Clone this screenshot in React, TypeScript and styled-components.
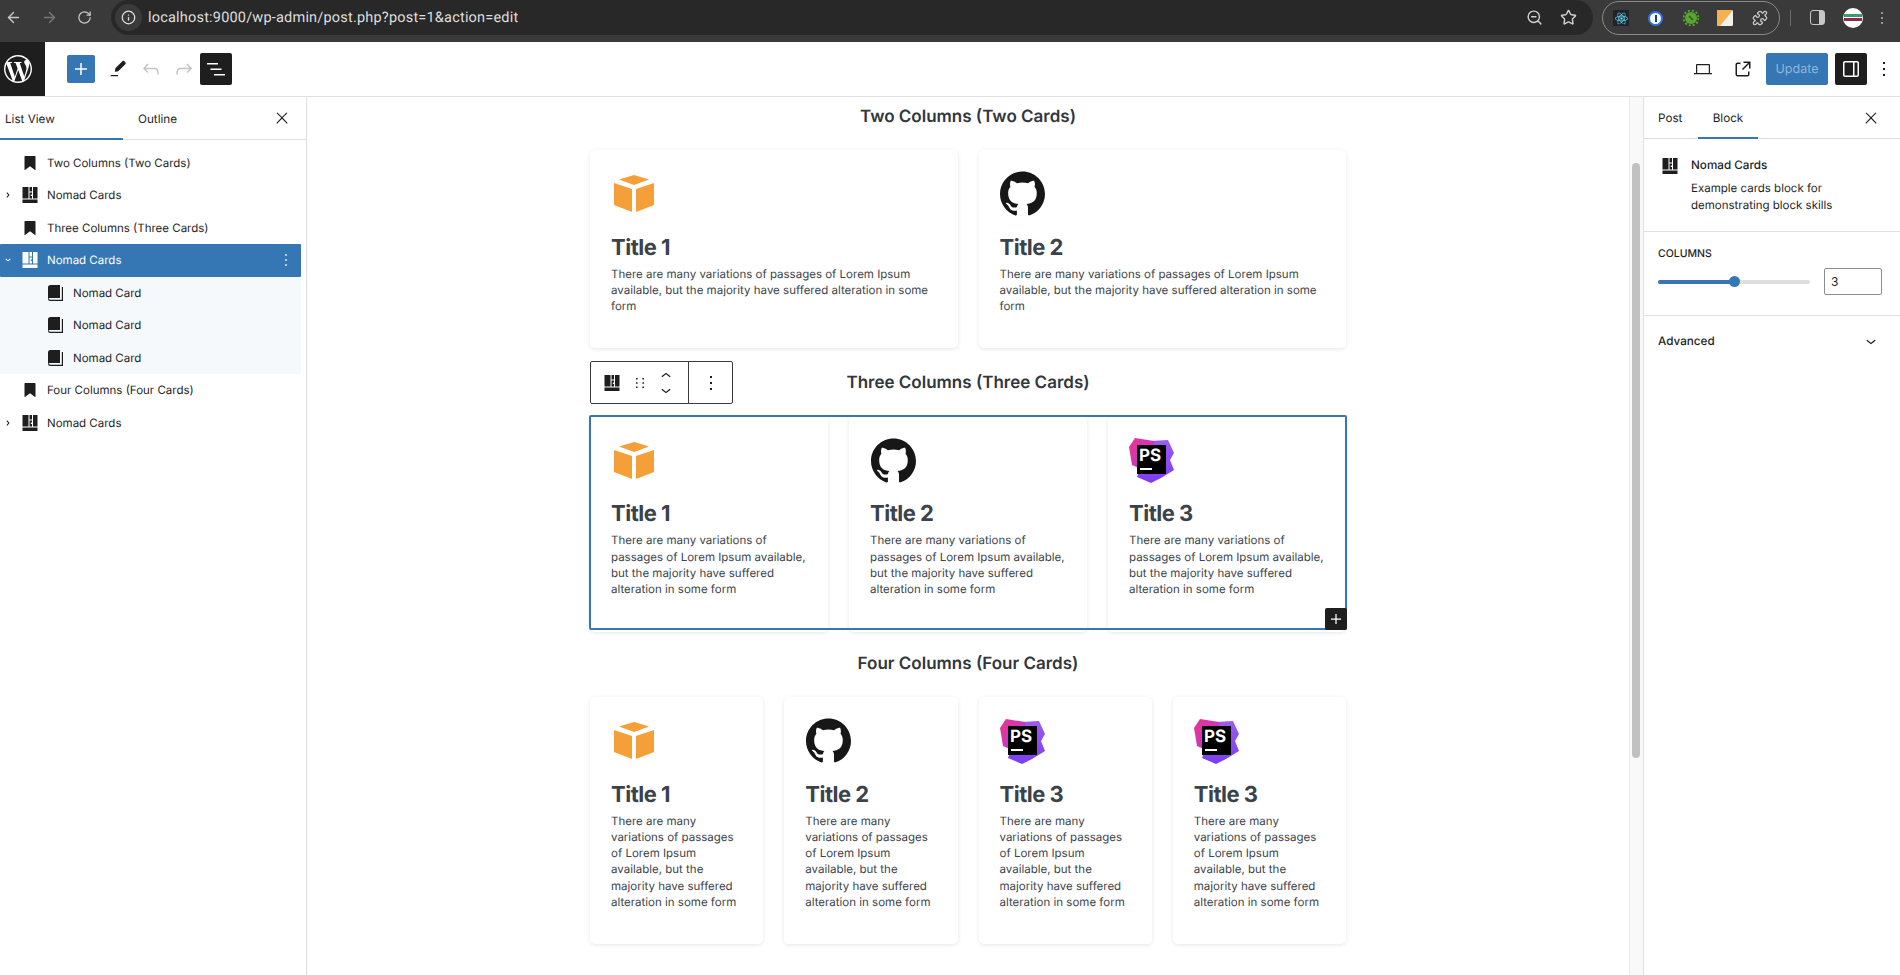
import React from 'react';
import styled, { createGlobalStyle } from 'styled-components';
import { ArrowLeft, ArrowRight, RotateCw, Info, ZoomOut, Star, Puzzle } from 'lucide-react';
import { SiReact, SiWordpress, SiGithub } from 'react-icons/si';

const BLUE = '#3577b4';
const DARK = '#1e1e1e';
const BODY_FONT = 'Inter, "Liberation Sans", sans-serif';
const LOREM = 'There are many variations of passages of Lorem Ipsum available, but the majority have suffered alteration in some form';

const GlobalStyle = createGlobalStyle`
  html, body {
    margin: 0;
    height: 100%;
    overflow: hidden;
    background: #fff;
    font-family: ${BODY_FONT};
    text-rendering: geometricPrecision;
  }
  * {
    box-sizing: border-box;
  }
  svg {
    flex: none;
  }
`;

const Page = styled.div`
  width: 1900px;
  height: 975px;
  display: flex;
  flex-direction: column;
  overflow: hidden;
`;

/* browser chrome */
const ChromeBar = styled.header`
  height: 42px;
  flex: none;
  background: #3a3a3a;
  display: flex;
  align-items: flex-start;
  color: #c7c7c7;
`;

const NavGroup = styled.div`
  width: 111px;
  height: 35px;
  flex: none;
  display: flex;
  align-items: center;
  padding-left: 5px;
  gap: 19px;
`;

const NavIcon = styled.span<{ $dim?: boolean }>`
  display: flex;
  color: ${(p) => (p.$dim ? '#777' : '#c7c7c7')};
`;

const Omnibox = styled.div`
  flex: 1;
  height: 35px;
  background: #282828;
  border-radius: 18px;
  display: flex;
  align-items: center;
  padding: 0 16px 0 4px;
`;

const InfoChip = styled.span`
  width: 27px;
  height: 27px;
  border-radius: 50%;
  background: #3a3a3a;
  display: flex;
  align-items: center;
  justify-content: center;
  color: #e3e3e3;
  margin-right: 6px;
`;

const UrlText = styled.span`
  font-family: Roboto, sans-serif;
  font-size: 14.5px;
  color: #dedede;
  letter-spacing: 0.2px;
  flex: 1;
`;

const OmniAction = styled.span`
  display: flex;
  margin-left: 17px;
  color: #d0d0d0;
`;

const ExtensionPill = styled.div`
  width: 178px;
  height: 34px;
  margin: 1px 0 0 9px;
  border: 1px solid #8a8a8a;
  border-radius: 17px;
  display: flex;
  align-items: center;
  justify-content: space-between;
  padding: 0 9px 0 8px;
`;

const ExtensionSlot = styled.span`
  width: 20px;
  height: 20px;
  display: flex;
  align-items: center;
  justify-content: center;
`;

const ReactBadge = styled.span`
  width: 16px;
  height: 16px;
  background: #20232a;
  color: #61dafb;
  display: flex;
  align-items: center;
  justify-content: center;
`;

const PasswordBadge = styled.span`
  width: 15px;
  height: 15px;
  border-radius: 50%;
  background: #fff;
  border: 2.5px solid #2f75e0;
  display: flex;
  align-items: center;
  justify-content: center;

  &::after {
    content: '';
    width: 2px;
    height: 7px;
    background: #1a3f8a;
  }
`;

const ChromeTail = styled.div`
  flex: none;
  width: 120px;
  height: 35px;
  display: flex;
  align-items: center;
`;

const ChromeDivider = styled.span`
  width: 1px;
  height: 16px;
  background: #6a6a6a;
  margin-left: 10px;
`;

const SidePanelGlyph = styled.span`
  width: 15px;
  height: 15px;
  margin-left: 19px;
  border: 1.5px solid #c7c7c7;
  border-radius: 3px;
  background: linear-gradient(90deg, transparent 58%, #c7c7c7 58%);
`;

const Avatar = styled.span`
  width: 20px;
  height: 20px;
  margin-left: 18px;
  border-radius: 50%;
  overflow: hidden;
  background: #fff;
  display: flex;
  flex-direction: column;
  justify-content: center;
  gap: 1px;
  padding: 0 1px;
`;

const AvatarStripe = styled.span<{ $color: string }>`
  height: 3px;
  background: ${(p) => p.$color};
`;

const ChromeMenu = styled.span`
  margin-left: 9px;
  display: flex;
  color: #d0d0d0;
`;

/* editor header */
const EditorBar = styled.div`
  height: 55px;
  flex: none;
  display: flex;
  align-items: center;
  border-bottom: 1px solid #e0e0e0;
  background: #fff;
`;

const LogoTile = styled.div`
  width: 45px;
  height: 54px;
  padding-right: 9px;
  background: ${DARK};
  color: #fff;
  display: flex;
  align-items: center;
  justify-content: center;
  flex: none;
`;

const EditorTools = styled.div`
  display: flex;
  align-items: center;
  margin-left: 22px;
  flex: 1;
`;

const InserterButton = styled.span`
  width: 28px;
  height: 28px;
  margin-right: 6px;
  background: ${BLUE};
  border-radius: 2px;
  color: #fff;
  display: flex;
  align-items: center;
  justify-content: center;
`;

const ToolIcon = styled.span<{ $muted?: boolean }>`
  width: 33px;
  height: 32px;
  display: flex;
  align-items: center;
  justify-content: center;
  color: ${(p) => (p.$muted ? '#c4c4c4' : DARK)};
`;

const ToggledTool = styled.span`
  width: 32px;
  height: 32px;
  background: ${DARK};
  border-radius: 2px;
  color: #fff;
  display: flex;
  align-items: center;
  justify-content: center;
`;

const EditorActions = styled.div`
  display: flex;
  align-items: center;
  flex: none;
  gap: 7px;
`;

const UpdateButton = styled.span`
  width: 62px;
  height: 32px;
  background: ${BLUE};
  border-radius: 2px;
  color: #8fb5d9;
  font-size: 12.5px;
  display: flex;
  align-items: center;
  justify-content: center;
`;

const TrailingTool = styled(ToolIcon)`
  margin-left: -7px;
`;

/* body */
const Workspace = styled.div`
  flex: 1;
  display: flex;
  min-height: 0;
`;

const ListPanel = styled.aside`
  width: 307px;
  flex: none;
  border-right: 1px solid #e0e0e0;
`;

const PanelTabs = styled.div`
  height: 43px;
  border-bottom: 1px solid #e0e0e0;
  display: flex;
  align-items: stretch;
`;

const ListTab = styled.div<{ $active?: boolean }>`
  width: 123px;
  display: flex;
  align-items: center;
  padding-left: ${(p) => (p.$active ? '5px' : '15px')};
  font-size: 11.7px;
  color: ${DARK};
  box-shadow: ${(p) => (p.$active ? `inset 0 -2px 0 ${BLUE}` : 'none')};
  margin-bottom: -1px;
`;

const PanelClose = styled.span`
  margin-left: auto;
  width: 48px;
  display: flex;
  align-items: center;
  justify-content: center;
  color: ${DARK};
`;

const TreeList = styled.ul`
  list-style: none;
  margin: 0;
  padding: 6.5px 5px 0 0;
`;

const TreeRow = styled.li<{ $selected?: boolean; $child?: boolean }>`
  height: 32.5px;
  display: flex;
  align-items: center;
  font-size: 11.5px;
  color: ${(p) => (p.$selected ? '#fff' : DARK)};
  background: ${(p) => (p.$selected ? BLUE : p.$child ? '#f5f9fc' : 'transparent')};
  border-radius: ${(p) => (p.$selected ? '1px' : '0')};
`;

const TreeChevron = styled.span`
  width: 16px;
  flex: none;
  display: flex;
  justify-content: center;
`;

const TreeGlyph = styled.span<{ $child?: boolean }>`
  width: 24px;
  flex: none;
  margin: ${(p) => (p.$child ? '0 6px 0 27px' : '0 5px 0 2px')};
  display: flex;
  align-items: center;
  justify-content: center;
`;

const TreeLabel = styled.span`
  flex: 1;
  white-space: nowrap;
`;

const TreeMenu = styled.span`
  width: 30px;
  flex: none;
  display: flex;
  justify-content: center;
`;

const Canvas = styled.main`
  flex: 1;
  min-width: 0;
  padding-top: 8px;
`;

const Sheet = styled.div`
  width: 756px;
  margin: 0 auto;
  display: flex;
  flex-direction: column;
`;

const Section = styled.section<{ $after: number }>`
  margin-bottom: ${(p) => p.$after}px;
`;

const SectionHeading = styled.h2`
  margin: 0 0 20.5px;
  text-align: center;
  font-size: 17px;
  line-height: 24px;
  font-weight: 600;
  color: #32373c;
`;

const CardGrid = styled.div<{ $columns: number }>`
  display: grid;
  grid-template-columns: repeat(${(p) => p.$columns}, 1fr);
  gap: 21px;
`;

/* the selected block: its frame is 215px high and stands 1px outside its cards */
const SelectedGrid = styled(CardGrid)`
  position: relative;
  height: 215px;
  margin: 1px -1px 0;
  padding: 1px 1px 0;
  outline: 2px solid ${BLUE};
  outline-offset: -2px;
  border-radius: 2px;
`;

const Card = styled.article`
  background: #fff;
  border-radius: 5px;
  box-shadow: 0 1px 4px rgba(0, 0, 0, 0.1);
  padding: 21px 21px 34px;
`;

const CardIcon = styled.div`
  width: 46px;
  height: 46px;
  color: #181717;
  display: flex;
  align-items: center;
  justify-content: center;
`;

const CardTitle = styled.h3`
  margin: 17px 0 4px;
  font-size: 22px;
  line-height: 28px;
  letter-spacing: -0.5px;
  font-weight: 700;
  color: #3b4249;
`;

const CardText = styled.p`
  margin: 0;
  font-size: 11.5px;
  line-height: 16.3px;
  color: #3c434a;
`;

const BlockToolbar = styled.div`
  position: absolute;
  top: -54px;
  left: 1px;
  width: 143px;
  height: 43px;
  background: #fff;
  border: 1.5px solid #3c3c3c;
  border-radius: 2px;
  display: flex;
  align-items: center;
  color: ${DARK};
`;

const ToolbarMain = styled.div`
  width: 98px;
  height: 100%;
  flex: none;
  border-right: 1.5px solid #3c3c3c;
  display: flex;
  align-items: center;
  gap: 4px;
  padding-left: 9px;
`;

const ToolbarMore = styled.div`
  flex: 1;
  display: flex;
  justify-content: center;
`;

const MoverStack = styled.span`
  display: flex;
  flex-direction: column;

  svg + svg {
    margin-top: -6px;
  }
`;

const AppenderButton = styled.span`
  position: absolute;
  right: 0;
  bottom: 0;
  width: 22px;
  height: 22px;
  border-radius: 2px;
  background: ${DARK};
  color: #fff;
  display: flex;
  align-items: center;
  justify-content: center;
`;

const ScrollTrack = styled.div`
  width: 14px;
  flex: none;
  background: #f9f9f9;
  border-left: 1px solid #ececec;
  padding-top: 66px;
`;

const ScrollThumb = styled.div`
  width: 8px;
  height: 595px;
  margin-left: 2px;
  border-radius: 4px;
  background: #c1c1c1;
`;

const Sidebar = styled.aside`
  width: 257px;
  flex: none;
  border-left: 1px solid #e0e0e0;
  font-size: 11.7px;
  color: ${DARK};
`;

const SidebarTabs = styled.div`
  height: 42px;
  border-bottom: 1px solid #e0e0e0;
  display: flex;
  align-items: stretch;
  padding: 0 5px 0 14px;
`;

const SidebarTab = styled.div<{ $active?: boolean }>`
  width: ${(p) => (p.$active ? '60px' : '40px')};
  display: flex;
  align-items: center;
  justify-content: ${(p) => (p.$active ? 'center' : 'flex-start')};
  box-shadow: ${(p) => (p.$active ? `inset 0 -2px 0 ${BLUE}` : 'none')};
  margin-bottom: -1px;
`;

const SidebarSection = styled.div`
  border-bottom: 1px solid #e0e0e0;
`;

const BlockCardRow = styled(SidebarSection)`
  height: 93px;
  display: flex;
  padding: 15px 14px 0 14px;
`;

const BlockCardText = styled.div`
  margin: 2px 0 0 9px;
`;

const BlockName = styled.div`
  line-height: 18px;
  font-weight: 450;
`;

const BlockDescription = styled.div`
  margin-top: 6px;
  line-height: 17px;
  font-size: 11.5px;
`;

const ColumnsSection = styled(SidebarSection)`
  height: 84px;
  padding: 15px 14px 0;
`;

const ControlLabel = styled.div`
  font-size: 10.5px;
  line-height: 14px;
  text-transform: uppercase;
  font-weight: 450;
`;

const SliderRow = styled.div`
  margin-top: 7px;
  display: flex;
  align-items: center;
`;

const SliderTrack = styled.div`
  width: 152px;
  height: 4px;
  border-radius: 2px;
  background: #dedede;
  position: relative;
`;

const SliderFill = styled.div`
  height: 100%;
  border-radius: 2px;
  background: ${BLUE};
`;

const SliderThumb = styled.span`
  position: absolute;
  top: -3.5px;
  width: 11px;
  height: 11px;
  margin-left: -5.5px;
  border-radius: 50%;
  background: ${BLUE};
`;

const NumberField = styled.input`
  width: 58px;
  height: 27px;
  margin-left: 14px;
  border: 1px solid #8c8c8c;
  border-radius: 2px;
  padding: 0 6px;
  font: 12px ${BODY_FONT};
  color: ${DARK};
  outline: none;
`;

const AdvancedRow = styled.div`
  height: 49px;
  display: flex;
  align-items: center;
  justify-content: space-between;
  padding: 0 19px 0 14px;
  font-weight: 450;
`;

/* drawings */
const WpIcon = ({ d, size = 24 }: { d: string; size?: number }) => (
  <svg width={size} height={size} viewBox="0 0 24 24" fill="currentColor" fillRule="evenodd">
    <path d={d} />
  </svg>
);

const ICONS = {
  plus: 'M11.25 6h1.5v5.25H18v1.5h-5.25V18h-1.5v-5.25H6v-1.5h5.25z',
  pencil: 'M4 20h8v-1.5H4V20zM18.9 3.5c-.6-.6-1.5-.6-2.1 0l-7.2 7.2c-.4.4-.6 1-.7 1.6l-.3 2.6 2.6-.3c.6-.1 1.2-.3 1.6-.7l7.2-7.2c.6-.6.6-1.5 0-2.1l-1.1-1.1z',
  undo: 'M18.3 11.7c-.6-.6-1.4-.9-2.3-.9H6.7l2.9-3.3-1.1-1-4.5 5L8.5 16l1-1-2.7-2.7H16c.5 0 .9.2 1.3.5 1 1 1 3.4 1 4.5v.3h1.5v-.2c0-1.5 0-4.3-1.5-5.7z',
  redo: 'M15.6 6.5l-1.1 1 2.9 3.3H8c-.9 0-1.7.3-2.3.9-1.4 1.5-1.4 4.2-1.4 5.6v.2h1.5v-.3c0-1.1 0-3.5 1-4.5.3-.3.7-.5 1.3-.5h9.2L14.5 15l1.1 1.1 4.6-4.6-4.6-5z',
  listView: 'M3 6h11v1.5H3V6Zm3.5 5.5h11V13h-11v-1.5ZM21 17H10v1.5h11V17Z',
  more: 'M13 19h-2v-2h2v2zm0-6h-2v-2h2v2zm0-6h-2V5h2v2z',
  close: 'M13 11.8l6.1-6.3-1-1-6.1 6.2-6.1-6.2-1 1 6.1 6.3-6.5 6.7 1 1 6.5-6.6 6.5 6.6 1-1z',
  bookmark: 'M7 5h10a.5.5 0 01.5.5v13.2a.3.3 0 01-.5.2L12 15.3l-5 3.6a.3.3 0 01-.5-.2V5.5A.5.5 0 017 5z',
  chevronRight: 'M10.86 8.04l3.42 3.99-3.42 3.99-1.14-.98 2.58-3.01-2.58-3.01z',
  chevronDownSmall: 'M15.04 9.71l-3.01 2.58-3.01-2.58-.98 1.14 3.99 3.42 3.99-3.42z',
  chevronDown: 'M17.5 11.6L12 16l-5.5-4.4.9-1.2L12 14l4.5-3.6 1 1.2z',
  chevronUp: 'M6.5 12.4L12 8l5.5 4.4-.9 1.2L12 10l-4.5 3.6-1-1.2z',
  drag: 'M8 7h1.6v1.6H8V7zm0 4.2h1.6v1.6H8v-1.6zm0 4.2h1.6V17H8v-1.6zm6.4-8.4H16v1.6h-1.6V7zm0 4.2H16v1.6h-1.6v-1.6zm0 4.2H16V17h-1.6v-1.6z',
  external: 'M19.5 4.5h-7V6h4.44l-5.97 5.97 1.06 1.06L18 7.06v4.44h1.5v-7Zm-13 1a2 2 0 0 0-2 2v10a2 2 0 0 0 2 2h10a2 2 0 0 0 2-2v-3H17v3a.5.5 0 0 1-.5.5h-10a.5.5 0 0 1-.5-.5v-10a.5.5 0 0 1 .5-.5h3V5.5h-3Z',
  drawer: 'M18 4H6c-1.1 0-2 .9-2 2v12c0 1.1.9 2 2 2h12c1.1 0 2-.9 2-2V6c0-1.1-.9-2-2-2zM6 18.5a.5.5 0 01-.5-.5V6a.5.5 0 01.5-.5h8v13H6zm12.5-.5a.5.5 0 01-.5.5h-2.5v-13H18a.5.5 0 01.5.5v12z',
  laptop: 'M6 7h12a1 1 0 011 1v8h2v1.2H3V16h2V8a1 1 0 011-1zm.2 1.2V16h11.6V8.2z',
};

const LayoutGlyph = () => (
  <svg width="24" height="24" viewBox="0 0 24 24" fill="currentColor">
    <path d="M4.5 4h6v11.5h-6zM11.5 4H14v4.5h-2.5zM15 4h4.5v11.5H15zM11.5 9.5H14v2h-1.2V13H14v2.5h-2.5zM4.5 16.500h15V20h-15z" />
  </svg>
);

const BookGlyph = () => (
  <svg width="24" height="24" viewBox="0 0 24 24">
    <path fill="currentColor" d="M5 6.5A2.5 2.5 0 0 1 7.5 4H17v13H7a2 2 0 0 0-2 1.2z" />
    <path fill="currentColor" d="M5 17.5A2.5 2.5 0 0 0 7.5 20H20V6h-1.2v12.8H7.5A1.5 1.5 0 0 1 6 17.8z" />
  </svg>
);

const CubeIcon = () => (
  <svg width="40" height="37" viewBox="0 0 40 37" fill="#f49f37">
    <path d="M20 0l15 4.5-15 5.5-15-5.500z" />
    <path d="M0 8l18 6v23L0 30z" />
    <path d="M22 14l18-6v22l-18 7z" />
  </svg>
);

const StormIcon = () => (
  <svg width="46" height="46" viewBox="0 0 46 46">
    <defs>
      <linearGradient id="ps-pink" x1="0" y1="0" x2="1" y2="1">
        <stop offset="0" stopColor="#f0328e" />
        <stop offset="1" stopColor="#a83fe0" />
      </linearGradient>
      <linearGradient id="ps-violet" x1="0" y1="0" x2="0" y2="1">
        <stop offset="0" stopColor="#9a5cf0" />
        <stop offset="1" stopColor="#7c3df0" />
      </linearGradient>
    </defs>
    <path fill="url(#ps-violet)" d="M22 4l17-1 6 13-4 7 4 10-13 8-10 5-14-6z" />
    <path fill="url(#ps-pink)" d="M6 1l19 3 3 18-14 11-11-5L0 10z" />
    <rect x="8" y="8" width="29" height="29" fill="#000" />
    <rect x="11" y="31" width="12" height="2" fill="#fff" />
    <text x="10" y="24" fontFamily="Inter, sans-serif" fontWeight="700" fontSize="17" fill="#fff">PS</text>
  </svg>
);

type IconKind = 'cube' | 'github' | 'storm';

const CardVisual = ({ kind }: { kind: IconKind }) => (
  <CardIcon>
    {kind === 'cube' && <CubeIcon />}
    {kind === 'github' && <SiGithub size={45} />}
    {kind === 'storm' && <StormIcon />}
  </CardIcon>
);

const CardItem = ({ title, kind }: { title: string; kind: IconKind }) => (
  <Card>
    <CardVisual kind={kind} />
    <CardTitle>{title}</CardTitle>
    <CardText>{LOREM}</CardText>
  </Card>
);

const TWO: [string, IconKind][] = [['Title 1', 'cube'], ['Title 2', 'github']];
const THREE: [string, IconKind][] = [...TWO, ['Title 3', 'storm']];
const FOUR: [string, IconKind][] = [...THREE, ['Title 3', 'storm']];

type TreeItem = { label: string; glyph: 'bookmark' | 'layout' | 'book'; chevron?: 'right' | 'down'; selected?: boolean };

const TREE: TreeItem[] = [
  { label: 'Two Columns (Two Cards)', glyph: 'bookmark' },
  { label: 'Nomad Cards', glyph: 'layout', chevron: 'right' },
  { label: 'Three Columns (Three Cards)', glyph: 'bookmark' },
  { label: 'Nomad Cards', glyph: 'layout', chevron: 'down', selected: true },
  { label: 'Nomad Card', glyph: 'book' },
  { label: 'Nomad Card', glyph: 'book' },
  { label: 'Nomad Card', glyph: 'book' },
  { label: 'Four Columns (Four Cards)', glyph: 'bookmark' },
  { label: 'Nomad Cards', glyph: 'layout', chevron: 'right' },
];

const App = () => (
  <Page>
    <GlobalStyle />
    <ChromeBar>
      <NavGroup>
        <NavIcon><ArrowLeft size={17} /></NavIcon>
        <NavIcon $dim><ArrowRight size={17} /></NavIcon>
        <NavIcon><RotateCw size={15} /></NavIcon>
      </NavGroup>
      <Omnibox>
        <InfoChip><Info size={15} /></InfoChip>
        <UrlText>localhost:9000/wp-admin/post.php?post=1&amp;action=edit</UrlText>
        <OmniAction><ZoomOut size={17} /></OmniAction>
        <OmniAction><Star size={17} /></OmniAction>
      </Omnibox>
      <ExtensionPill>
        <ExtensionSlot><ReactBadge><SiReact size={13} /></ReactBadge></ExtensionSlot>
        <ExtensionSlot><PasswordBadge /></ExtensionSlot>
        <ExtensionSlot>
          <svg width="16" height="16" viewBox="0 0 16 16">
            <circle cx="8" cy="8" r="6" fill="#58a630" />
            <circle cx="8" cy="8" r="7.5" fill="none" stroke="#58a630" strokeWidth="2" strokeDasharray="2 2" />
            <path d="M6 6l4 4" stroke="#2c5c18" strokeWidth="1.6" />
          </svg>
        </ExtensionSlot>
        <ExtensionSlot>
          <svg width="16" height="16" viewBox="0 0 16 16">
            <rect width="16" height="16" rx="1.5" fill="#f0f0ee" />
            <path d="M0 0h16L3 16H0z" fill="#f2b252" />
          </svg>
        </ExtensionSlot>
        <ExtensionSlot><Puzzle size={16} color="#c7c7c7" /></ExtensionSlot>
      </ExtensionPill>
      <ChromeTail>
        <ChromeDivider />
        <SidePanelGlyph />
        <Avatar>
          <AvatarStripe $color="#3d9a6a" />
          <AvatarStripe $color="#8a2a55" />
        </Avatar>
        <ChromeMenu><WpIcon d={ICONS.more} size={20} /></ChromeMenu>
      </ChromeTail>
    </ChromeBar>

    <EditorBar>
      <LogoTile><SiWordpress size={28} /></LogoTile>
      <EditorTools>
        <InserterButton><WpIcon d={ICONS.plus} /></InserterButton>
        <ToolIcon><WpIcon d={ICONS.pencil} size={22} /></ToolIcon>
        <ToolIcon $muted><WpIcon d={ICONS.undo} /></ToolIcon>
        <ToolIcon $muted><WpIcon d={ICONS.redo} /></ToolIcon>
        <ToggledTool><WpIcon d={ICONS.listView} /></ToggledTool>
      </EditorTools>
      <EditorActions>
        <ToolIcon><WpIcon d={ICONS.laptop} /></ToolIcon>
        <ToolIcon><WpIcon d={ICONS.external} /></ToolIcon>
        <UpdateButton>Update</UpdateButton>
        <ToggledTool><WpIcon d={ICONS.drawer} /></ToggledTool>
        <TrailingTool><WpIcon d={ICONS.more} /></TrailingTool>
      </EditorActions>
    </EditorBar>

    <Workspace>
      <ListPanel>
        <PanelTabs>
          <ListTab $active>List View</ListTab>
          <ListTab>Outline</ListTab>
          <PanelClose><WpIcon d={ICONS.close} size={18} /></PanelClose>
        </PanelTabs>
        <TreeList>
          {TREE.map((item, index) => (
            <TreeRow key={index} $selected={item.selected} $child={item.glyph === 'book'}>
              <TreeChevron>
                {item.chevron === 'right' && <WpIcon d={ICONS.chevronRight} size={16} />}
                {item.chevron === 'down' && <WpIcon d={ICONS.chevronDownSmall} size={16} />}
              </TreeChevron>
              <TreeGlyph $child={item.glyph === 'book'}>
                {item.glyph === 'bookmark' && <WpIcon d={ICONS.bookmark} />}
                {item.glyph === 'layout' && <LayoutGlyph />}
                {item.glyph === 'book' && <BookGlyph />}
              </TreeGlyph>
              <TreeLabel>{item.label}</TreeLabel>
              {item.selected && <TreeMenu><WpIcon d={ICONS.more} size={20} /></TreeMenu>}
            </TreeRow>
          ))}
        </TreeList>
      </ListPanel>

      <Canvas>
        <Sheet>
          <Section $after={22.5}>
            <SectionHeading>Two Columns (Two Cards)</SectionHeading>
            <CardGrid $columns={2}>
              {TWO.map(([title, kind]) => <CardItem key={title} title={title} kind={kind} />)}
            </CardGrid>
          </Section>
          <Section $after={21.7}>
            <SectionHeading>Three Columns (Three Cards)</SectionHeading>
            <SelectedGrid $columns={3}>
              <BlockToolbar>
                <ToolbarMain>
                  <LayoutGlyph />
                  <WpIcon d={ICONS.drag} />
                  <MoverStack>
                    <WpIcon d={ICONS.chevronUp} size={20} />
                    <WpIcon d={ICONS.chevronDown} size={20} />
                  </MoverStack>
                </ToolbarMain>
                <ToolbarMore><WpIcon d={ICONS.more} /></ToolbarMore>
              </BlockToolbar>
              {THREE.map(([title, kind]) => <CardItem key={title} title={title} kind={kind} />)}
              <AppenderButton><WpIcon d={ICONS.plus} size={20} /></AppenderButton>
            </SelectedGrid>
          </Section>
          <Section $after={0}>
            <SectionHeading>Four Columns (Four Cards)</SectionHeading>
            <CardGrid $columns={4}>
              {FOUR.map(([title, kind], index) => <CardItem key={index} title={title} kind={kind} />)}
            </CardGrid>
          </Section>
        </Sheet>
      </Canvas>

      <ScrollTrack><ScrollThumb /></ScrollTrack>

      <Sidebar>
        <SidebarTabs>
          <SidebarTab>Post</SidebarTab>
          <SidebarTab $active>Block</SidebarTab>
          <PanelClose><WpIcon d={ICONS.close} size={18} /></PanelClose>
        </SidebarTabs>
        <BlockCardRow>
          <LayoutGlyph />
          <BlockCardText>
            <BlockName>Nomad Cards</BlockName>
            <BlockDescription>Example cards block for demonstrating block skills</BlockDescription>
          </BlockCardText>
        </BlockCardRow>
        <ColumnsSection>
          <ControlLabel>Columns</ControlLabel>
          <SliderRow>
            <SliderTrack>
              <SliderFill style={{ width: '50%' }} />
              <SliderThumb style={{ left: '50%' }} />
            </SliderTrack>
            <NumberField readOnly value="3" />
          </SliderRow>
        </ColumnsSection>
        <AdvancedRow>
          Advanced
          <WpIcon d={ICONS.chevronDown} size={20} />
        </AdvancedRow>
      </Sidebar>
    </Workspace>
  </Page>
);

export default App;
